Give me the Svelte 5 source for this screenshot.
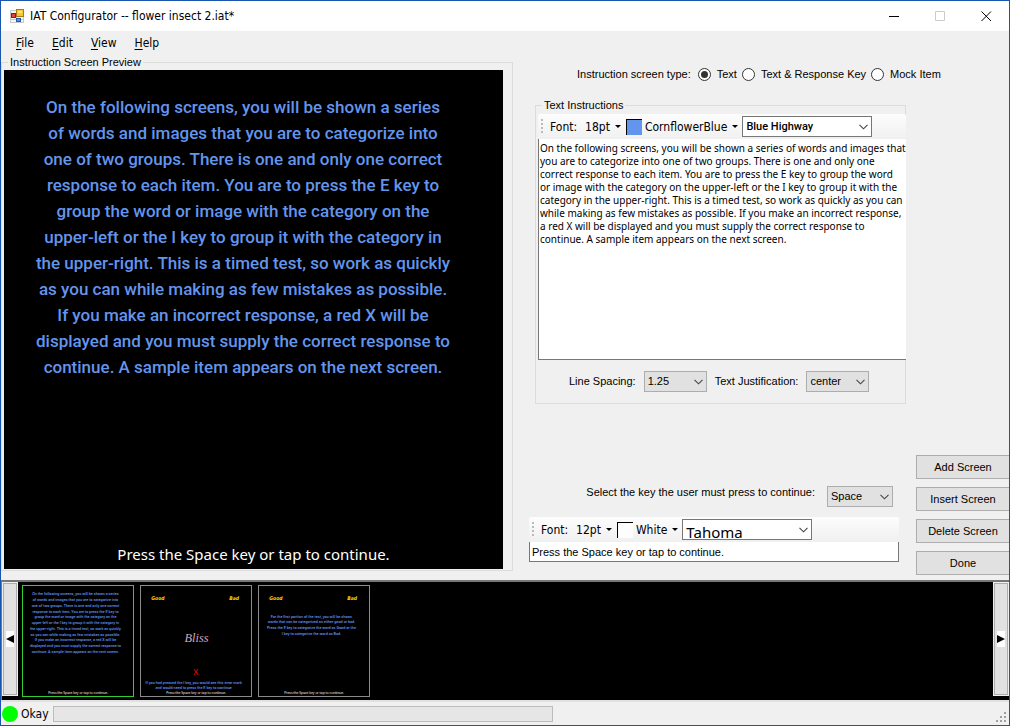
<script>
  const menus = ['File', 'Edit', 'View', 'Help'];
  const previewLines = [
    'On the following screens, you will be shown a series',
    'of words and images that you are to categorize into',
    'one of two groups. There is one and only one correct',
    'response to each item. You are to press the E key to',
    'group the word or image with the category on the',
    'upper-left or the I key to group it with the category in',
    'the upper-right. This is a timed test, so work as quickly',
    'as you can while making as few mistakes as possible.',
    'If you make an incorrect response, a red X will be',
    'displayed and you must supply the correct response to',
    'continue. A sample item appears on the next screen.'
  ];
  const mockLines = [
    'If you had pressed the I key, you would see this error mark',
    'and would need to press the E key to continue'
  ];
  const keyLines = [
    'For the first portion of the test, you will be shown',
    'words that can be categorized as either good or bad.',
    'Press the E key to categorize the word as Good or the',
    'I key to categorize the word as Bad.'
  ];
  const continueText = 'Press the Space key or tap to continue.';
  let instructions = $state(
    'On the following screens, you will be shown a series of words and images that\n' +
    'you are to categorize into one of two groups. There is one and only one\n' +
    'correct response to each item. You are to press the E key to group the word\n' +
    'or image with the category on the upper-left or the I key to group it with the\n' +
    'category in the upper-right. This is a timed test, so work as quickly as you can\n' +
    'while making as few mistakes as possible. If you make an incorrect response,\n' +
    'a red X will be displayed and you must supply the correct response to\n' +
    'continue. A sample item appears on the next screen.'
  );
  let footer = $state(continueText);
  let type = $state('Text');
  const types = ['Text', 'Text & Response Key', 'Mock Item'];
  const thumbs = [
    { lines: previewLines, y: 43, x: 238, labels: false, bliss: false },
    { lines: mockLines, y: 443, x: 239, labels: true, bliss: true },
    { lines: keyLines, y: 143, x: 238, labels: true, bliss: false }
  ];
  let selected = $state(0);
  const actions = ['Add Screen', 'Insert Screen', 'Delete Screen', 'Done'];
</script>

{#snippet combo(id, cls, value, label)}
  <span class="combo {cls}">
    <select {id} aria-label={label}><option>{value}</option></select>
    <svg viewBox="0 0 9 6" width="9" height="6" aria-hidden="true"><path d="M.5 .8 4.5 4.8 8.5 .8" fill="none" stroke="#444" stroke-width="1.1" /></svg>
  </span>
{/snippet}

{#snippet toolbar(size, colour, name, id, font, cls)}
  <div class="toolbar">
    <span class="grip"></span>
    <span class="fontlabel">Font:</span>
    <button class="drop">{size}<i></i></button>
    <button class="drop colour"><b style:background={colour}></b>{name}<i></i></button>
    {@render combo(id, cls, font, 'Font family')}
  </div>
{/snippet}

<div class="window">
  <header>
    <svg class="logo" viewBox="0 0 15 15" width="15" height="15" aria-hidden="true">
      <rect x=".5" y="1.5" width="13" height="12" fill="#f6f6f6" stroke="#c8c8c8" />
      <path d="M6.500 1v13M0 10.500h14" stroke="#c8c8c8" />
      <rect x="6.500" y=".5" width="7" height="7" fill="#fbc52f" stroke="#ad7a12" />
      <rect x="8" y="2" width="4" height="2" fill="#ffe488" />
      <rect x="1.500" y="4.500" width="4" height="4" fill="#d9473a" stroke="#8c1b14" />
      <rect x="6.500" y="9.500" width="4" height="3" fill="#5d92ea" stroke="#2257ad" />
    </svg>
    <h1>IAT Configurator -- flower insect 2.iat*</h1>
    <button class="cap" aria-label="Minimize"><svg width="11" height="11"><path d="M0 5.5h10" stroke="#000" /></svg></button>
    <button class="cap" aria-label="Maximize" disabled><svg width="11" height="11"><path d="M.5 .5h9v9h-9z" fill="none" stroke="#ccc" /></svg></button>
    <button class="cap" aria-label="Close"><svg width="11" height="11"><path d="M.5 .5l9.500 9.500M10 .5l-9.500 9.500" stroke="#000" /></svg></button>
  </header>

  <nav>
    {#each menus as m}<button><u>{m[0]}</u>{m.slice(1)}</button>{/each}
  </nav>

  <main>
    <fieldset class="preview">
      <legend>Instruction Screen Preview</legend>
      <div class="stage">
        <div class="copy">{#each previewLines as line}<p>{line}</p>{/each}</div>
        <p class="press">{continueText}</p>
      </div>
    </fieldset>

    <div class="side">
      <div class="types" role="radiogroup" aria-labelledby="type-label">
        <span id="type-label">Instruction screen type:</span>
        {#each types as t}
          <label><input type="radio" name="type" value={t} bind:group={type} />{t}</label>
        {/each}
      </div>

      <fieldset class="text">
        <legend>Text Instructions</legend>
        {@render toolbar('18pt', '#6495ed', 'CornflowerBlue', 'text-font', 'Blue Highway', 'face')}
        <textarea aria-label="Text Instructions" spellcheck="false" bind:value={instructions}></textarea>
        <div class="options">
          <label for="spacing">Line Spacing:</label>
          {@render combo('spacing', 'grey', '1.25')}
          <label for="justify">Text Justification:</label>
          {@render combo('justify', 'grey', 'center')}
        </div>
      </fieldset>

      <div class="lower">
        <div class="continue">
          <div class="key">
            <label for="key">Select the key the user must press to continue:</label>
            {@render combo('key', 'grey', 'Space')}
          </div>
          {@render toolbar('12pt', '#fdfdfd', 'White', 'key-font', 'Tahoma', 'face large')}
          <input class="line" aria-label="Continue instructions" bind:value={footer} />
        </div>
        <div class="actions">
          {#each actions as a}<button>{a}</button>{/each}
        </div>
      </div>
    </div>
  </main>

  <section class="strip">
    <button class="scroll" aria-label="Previous screens"><svg width="8" height="16" viewBox="0 0 8 16"><path fill="#fff" d="M0 0h8v16H0z" /><path d="M8 4v8L0 8z" /></svg></button>
    <div class="thumbs">
      {#each thumbs as t, i}
        <button class="thumb" class:on={selected === i} aria-label="Screen {i + 1}" onclick={() => (selected = i)}>
          <svg viewBox="0 0 499 499" text-anchor="middle">
            {#if t.labels}
              <g class="good"><text x="77" y="62">Good</text><text x="423" y="62">Bad</text></g>
            {/if}
            {#if t.bliss}
              <text class="bliss" x="252" y="255">Bliss</text>
              <text class="miss" x="248" y="405">X</text>
            {/if}
            <g class="body">
              {#each t.lines as line, n}<text x={t.x} y={t.y + n * 26}>{line}</text>{/each}
            </g>
            <text class="foot" x="250" y="491">{continueText}</text>
          </svg>
        </button>
      {/each}
    </div>
    <button class="scroll" aria-label="Next screens"><svg width="8" height="16" viewBox="0 0 8 16"><path fill="#fff" d="M0 0h8v16H0z" /><path d="M0 4v8l8-4z" /></svg></button>
  </section>

  <footer>
    <span class="light"></span>
    <span>Okay</span>
    <div class="progress" role="progressbar" aria-label="Progress" aria-valuenow="0"></div>
    <svg class="size" width="10" height="10" viewBox="0 0 10 10" fill="#a0a0a0" aria-hidden="true">
      <path d="M8 0h2v2H8zM4 4h2v2H4zM8 4h2v2H8zM0 8h2v2H0zM4 8h2v2H4zM8 8h2v2H8z" />
    </svg>
  </footer>
</div>

<style>
  :global(body) { margin: 0; background: #f0f0f0; }
  * { box-sizing: border-box; }
  p, h1 { margin: 0; }
  button, input, select, textarea { font: inherit; color: inherit; margin: 0; border-radius: 0; }
  .window {
    --ui: 'DejaVu Sans Condensed', 'DejaVu Sans', sans-serif;
    --small: 'Liberation Sans', Arial, sans-serif;
    --screen: 'Noto Sans', sans-serif;
    display: flex; flex-direction: column; min-height: 100vh;
    border: 1px solid #1a56b0; background: #f0f0f0;
    font: 11px/13px var(--small); color: #000;
  }
  header { display: flex; align-items: center; height: 30px; padding-left: 9px; background: #fff; font: 12px/16px var(--ui); }
  h1 { flex: 1; margin-left: 5px; font: inherit; }
  .cap { display: grid; place-items: center; width: 46px; height: 30px; padding: 0; border: 0; background: none; }
  .cap svg { display: block; }
  nav { display: flex; gap: 2px; height: 24px; padding-left: 7px; font: 12px/24px var(--ui); }
  nav button { padding: 0 8px; border: 0; background: none; }
  u { text-underline-offset: 2px; }

  main { display: grid; grid-template-columns: minmax(0, 512fr) minmax(0, 496fr); flex: 1; }
  fieldset { min-width: 0; margin: 0; padding: 0; border: 1px solid #dcdcdc; }
  legend { height: 15px; margin-left: 4px; padding: 0 2px; line-height: 14px; white-space: nowrap; }
  .preview { align-self: start; padding: 0 9px 1px 2px; }
  .stage { display: flex; flex-direction: column; justify-content: space-between; aspect-ratio: 1; padding: 24px 21px 5px 0; background: #000; text-align: center; white-space: nowrap; }
  .copy { color: #6495ed; font: 500 17px/26px Roboto, sans-serif; }
  .press { padding-left: 21px; color: #fff; font: 15px/20px var(--screen); }

  .side { display: flex; flex-direction: column; min-width: 0; padding-top: 9px; }
  .types { display: flex; align-items: center; gap: 5px; height: 20px; padding-left: 64px; white-space: nowrap; }
  .types span { margin-right: 2px; }
  .types label { display: flex; align-items: center; gap: 6px; }
  .types input { display: grid; place-items: center; appearance: none; width: 13px; height: 13px; border: 1px solid #333; border-radius: 50%; background: #fff; }
  .types input:checked::before { content: ''; width: 7px; height: 7px; border-radius: 50%; background: #333; }

  .text { margin: 14px 103px 0 22px; padding-left: 2px; }
  .toolbar { display: flex; align-items: center; height: 25px; padding-left: 3px; border-radius: 2px; background: linear-gradient(#fdfdfd, #f0f0f0); font: 12px/16px var(--ui); white-space: nowrap; }
  .text .toolbar { margin: 1px -1px 0 0; }
  .grip { width: 2px; height: 15px; background: repeating-linear-gradient(#bbb 0 2px, transparent 2px 4px); }
  .fontlabel { margin: 0 8px 0 7px; }
  .drop { display: flex; align-items: center; gap: 5px; padding: 0; border: 0; background: none; }
  .drop i { border: 3px solid transparent; border-top-color: #000; border-bottom: 0; }
  .colour { margin: 0 4px 0 5px; }
  .colour b { width: 16px; height: 16px; margin-right: -2px; border: solid #000; border-width: 1px 0 0 1px; }

  .combo { display: grid; align-items: center; }
  .combo > * { grid-area: 1 / 1; }
  .combo svg { justify-self: end; margin-right: 4px; pointer-events: none; }
  .combo select { appearance: none; width: 100%; height: 21px; padding: 0 3px; border: 1px solid #adadad; background: #e1e1e1; outline: 0; }
  .face { width: 130px; }
  .face select { border-color: #777; background: #fff; font: 500 11px/16px Roboto, sans-serif; }
  .large select { padding-top: 3px; font: 15px/18px var(--screen); }

  textarea { display: block; width: calc(100% + 1px); height: 221px; padding: 3px 0 0 1px; border: solid #777; border-width: 0 0 1px 1px; outline: 0; background: #fff; resize: none; overflow: hidden; white-space: pre; font: 10px/13px var(--screen); }
  .options { display: flex; align-items: center; gap: 8px; height: 43px; padding-left: 31px; white-space: nowrap; }
  .options .combo { width: 63px; }

  .lower { display: flex; justify-content: space-between; gap: 17px; margin: auto 0 5px 16px; }
  .continue { display: flex; flex: 1; flex-direction: column; min-width: 0; padding-top: 31px; }
  .key { display: flex; justify-content: flex-end; gap: 12px; margin: 0 6px 10px 0; }
  .key .combo { width: 66px; }
  .line { height: 20px; padding: 0 2px; border: 1px solid #777; border-top: 0; outline: 0; background: #fff; }
  .actions { display: grid; align-content: space-between; width: 93px; height: 120px; }
  .actions button { height: 24px; padding: 0; border: 1px solid #adadad; border-right: 0; background: #e1e1e1; }

  .strip { display: flex; height: 120px; border: solid #777; border-width: 2px 0 0 1px; background: #000; }
  .scroll { display: grid; place-items: center; width: 14px; height: 112px; padding: 0; border: 1px solid #adadad; background: #e1e1e1; box-shadow: 0 0 0 1px #f0f0f0; margin: 1px 1px 0; }
  .scroll:first-child { margin-right: 5px; }
  .thumbs { display: flex; flex: 1; gap: 6px; padding-top: 3px; }
  .thumb { width: 112px; height: 112px; padding: 0; border: 1px solid #8a8a8a; background: #000; }
  .thumb.on { border-color: #32cd32; }
  .thumb svg { display: block; }
  .body { fill: #6495ed; font: 500 17px Roboto, sans-serif; }
  .foot { fill: #fff; font: 15px var(--screen); }
  .good { fill: #ffd700; font: italic bold 23px 'DejaVu Sans Condensed', sans-serif; }
  .bliss { fill: #d8a5b8; font: italic 56px 'Liberation Serif', serif; }
  .miss { fill: #f00; font: 38px 'Liberation Sans', sans-serif; }

  footer { display: flex; align-items: center; gap: 3px; height: 25px; padding: 1px 3px 0 1px; border-top: 2px solid #e1e1e1; font: 12px/16px var(--ui); }
  .light { width: 16px; height: 16px; border-radius: 50%; background: #0f0; }
  .progress { width: 500px; height: 16px; margin-left: 1px; border: 1px solid #bcbcbc; background: #e6e6e6; }
  .size { align-self: end; margin: 0 0 3px auto; }
</style>
